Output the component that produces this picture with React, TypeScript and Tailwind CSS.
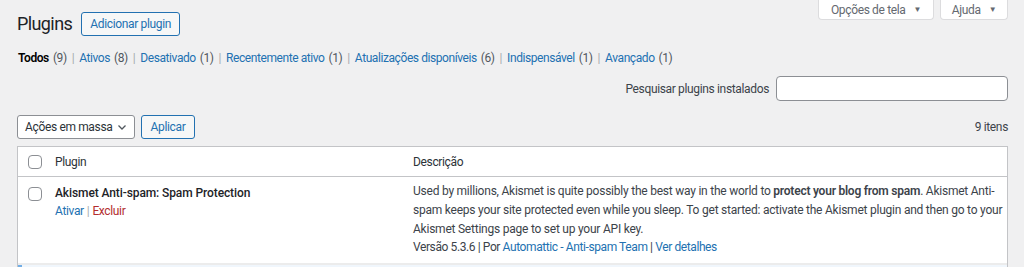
import React from 'react';

const filters = [
  { label: 'Todos', count: 9, current: true },
  { label: 'Ativos', count: 8 },
  { label: 'Desativado', count: 1 },
  { label: 'Recentemente ativo', count: 1 },
  { label: 'Atualizações disponíveis', count: 6 },
  { label: 'Indispensável', count: 1 },
  { label: 'Avançado', count: 1 },
];

function Checkbox() {
  return <span className="block w-[14px] h-[14px] rounded-[4px] border border-[#8c8f94] bg-white" />;
}

export default function App() {
  return (
    <div
      className="w-[1024px] h-[267px] overflow-hidden bg-[#f0f0f1] text-[12px] tracking-[-0.35px] text-[#3c434a]"
      style={{ fontFamily: 'Roboto, "Noto Sans", sans-serif' }}
    >
      <div className="flex justify-between pl-[17px] pr-[16px]">
        <div className="flex items-center gap-[9px] pt-[12px]">
          <h1 className="text-[18px] tracking-[-0.6px] leading-[24px] text-[#1d2327]">Plugins</h1>
          <button className="h-[24px] w-[99px] border border-[#2271b1] rounded-[3px] bg-[#f6f7f7] text-[#2271b1] leading-none">
            Adicionar plugin
          </button>
        </div>
        {/* screen meta tabs */}
        <div className="flex gap-[6px] items-start">
          <button className="h-[20px] w-[116px] flex items-center justify-center gap-[8px] bg-white border border-t-0 border-[#dcdcde] rounded-b-[4px] text-[#646970]">
            Opções de tela <span className="text-[8px]">▼</span>
          </button>
          <button className="h-[20px] w-[68px] flex items-center justify-center gap-[8px] bg-white border border-t-0 border-[#dcdcde] rounded-b-[4px] text-[#646970]">
            Ajuda <span className="text-[8px]">▼</span>
          </button>
        </div>
      </div>

      <div className="pl-[17px] pr-[16px]">
        <ul className="flex items-center mt-[12px] h-[20px] text-[#50575e] pl-[1px] tracking-[-0.42px]">
          {filters.map((f, i) => (
            <li key={f.label} className="flex items-center">
              {i > 0 && <span className="mx-[5px] text-[#a7aaad]">|</span>}
              <span className={f.current ? 'font-semibold text-black' : 'text-[#2271b1]'}>{f.label}</span>
              <span className="ml-[4px]">({f.count})</span>
            </li>
          ))}
        </ul>

        <div className="flex items-center justify-end gap-[7px] mt-[8px]">
          <label className="text-[#3c434a]">Pesquisar plugins instalados</label>
          <input className="w-[232px] h-[25px] bg-white border border-[#8c8f94] rounded-[4px]" />
        </div>

        <div className="flex items-center mt-[14px] h-[24px]">
          <div className="h-[24px] w-[118px] whitespace-nowrap flex items-center justify-between pl-[7px] pr-[6px] bg-white border border-[#8c8f94] rounded-[3px] text-[#2c3338]">
            Ações em massa
            <svg width="12" height="12" viewBox="0 0 12 12" fill="none" stroke="#50575e" strokeWidth="1.3">
              <path d="M2.5 4.5 6 8l3.5-3.5" />
            </svg>
          </div>
          <button className="ml-[6px] h-[24px] w-[54px] border border-[#2271b1] rounded-[3px] bg-[#f6f7f7] text-[#2271b1]">
            Aplicar
          </button>
          <span className="ml-auto text-[#3c434a]">9 itens</span>
        </div>

        <div className="mt-[7px] bg-white border border-[#c3c4c7]">
          <div className="flex items-center h-[30px] border-b border-[#c3c4c7] text-[#2c3338]">
            <div className="w-[37px] shrink-0 pl-[10px]">
              <Checkbox />
            </div>
            <div className="w-[358px] shrink-0">Plugin</div>
            <div>Descrição</div>
          </div>
          <div className="flex h-[88px] pt-[7px] border-b-2 border-[#ececec]">
            <div className="w-[37px] shrink-0 pl-[10px] pt-[3px]">
              <Checkbox />
            </div>
            <div className="w-[358px] shrink-0">
              <div className="font-medium tracking-[-0.1px] text-[#1d2327] leading-[18px]">
                Akismet Anti-spam: Spam Protection
              </div>
              <div className="leading-[18px]">
                <span className="text-[#2271b1]">Ativar</span>
                <span className="mx-[3px] text-[#a7aaad]">|</span>
                <span className="text-[#b32d2e]">Excluir</span>
              </div>
            </div>
            <div className="text-[#3c434a] leading-[19px] -mt-[2px] tracking-[-0.23px]">
              <p className="whitespace-nowrap">
                Used by millions, Akismet is quite possibly the best way in the world to{' '}
                <strong className="font-semibold">protect your blog from spam</strong>. Akismet Anti-
                <br />
                spam keeps your site protected even while you sleep. To get started: activate the Akismet plugin and then go to your
                <br />
                Akismet Settings page to set up your API key.
              </p>
              <p className="mt-[-1px] leading-[19px] tracking-[-0.4px]">
                Versão 5.3.6 | Por <span className="text-[#2271b1]">Automattic - Anti-spam Team</span> |{' '}
                <span className="text-[#2271b1]">Ver detalhes</span>
              </p>
            </div>
          </div>
          <div className="h-[30px] bg-[#f0f6fc] border-l-4 border-[#72aee6]" />
        </div>
      </div>
    </div>
  );
}
